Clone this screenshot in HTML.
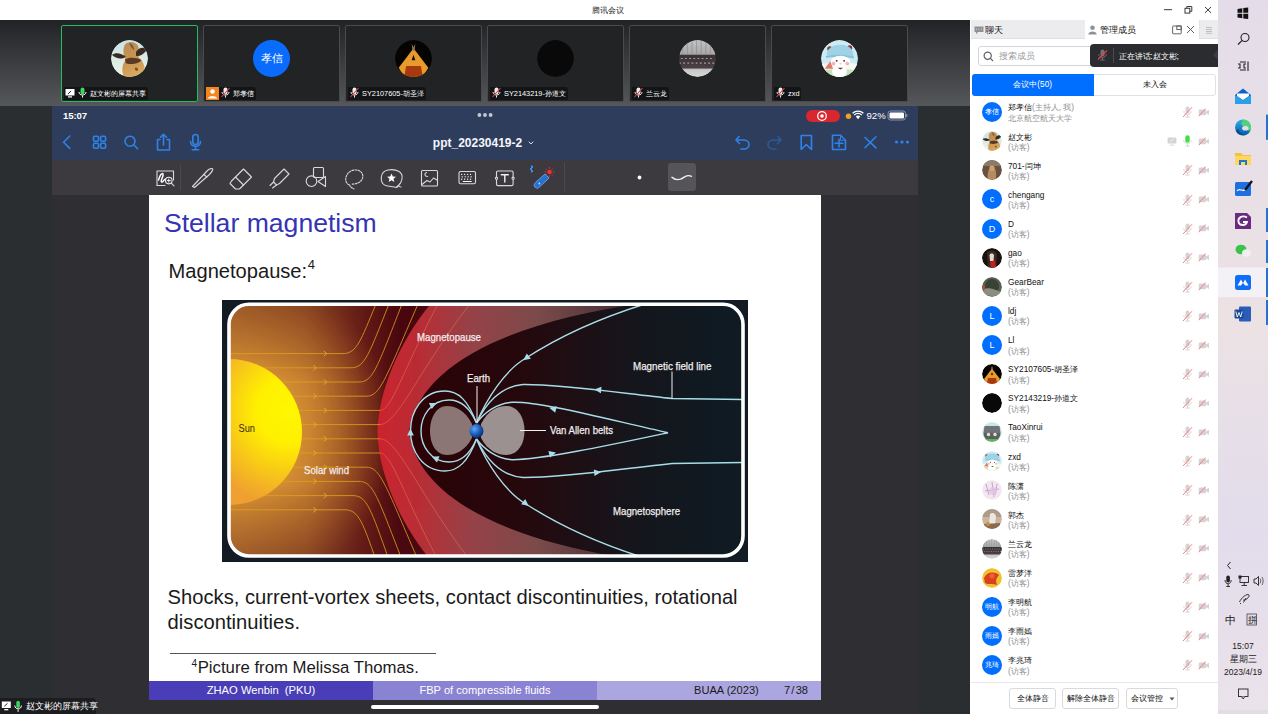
<!DOCTYPE html>
<html><head><meta charset="utf-8">
<style>
*{box-sizing:border-box;margin:0;padding:0}
html,body{width:1268px;height:714px;overflow:hidden}
body{position:relative;background:#2b2e31;font-family:"Liberation Sans",sans-serif;}
.a{position:absolute}
.tile{position:absolute;top:24.8px;width:137px;height:77px;background:#222325;border:1px solid #4a4a4c;border-radius:2px}
.tile .av{position:absolute;left:49px;top:14px;width:37px;height:37px;border-radius:50%;overflow:hidden}
.tile .lab{position:absolute;left:2px;top:61.6px;height:13px;background:#131416;border-radius:0 3px 0 0;color:#fff;font-size:7.35px;line-height:14px;white-space:nowrap;padding:0 2px 0 2px}
.tile .lab svg{margin-right:1px}
.row{position:absolute;left:971px;width:246px;height:29px}
.row .av{position:absolute;left:11px;top:4px;width:20px;height:20px;border-radius:50%;overflow:hidden;background:#006eff;color:#fff;font-size:6.5px;line-height:20px;text-align:center}
.row .n{position:absolute;left:37px;top:4.3px;font-size:8.3px;line-height:11px;color:#111;white-space:nowrap}
.row .s{position:absolute;left:37px;top:14.6px;font-size:8.3px;line-height:11px;color:#8d8f94;white-space:nowrap}
.row .ic{position:absolute;left:205px;top:7px}
.btn{position:absolute;top:688.3px;height:21px;border:1px solid #d8dade;border-radius:3px;background:#fff;font-size:8px;line-height:19px;text-align:center;color:#111;white-space:nowrap}
</style></head>
<body>

<svg width="0" height="0" style="position:absolute">
<defs>
<linearGradient id="gsky" x1="0" y1="0" x2="0" y2="1"><stop offset="0" stop-color="#c9e2e6"/><stop offset="1" stop-color="#eef3e6"/></linearGradient>
<radialGradient id="gfire" cx="0.5" cy="0.9" r="0.6"><stop offset="0" stop-color="#a83a10"/><stop offset="0.45" stop-color="#f0a030"/><stop offset="0.8" stop-color="#3a1a05"/><stop offset="1" stop-color="#050302"/></radialGradient>
<symbol id="av-giraffe" viewBox="0 0 40 40">
<linearGradient id="ggir" x1="0" y1="0" x2="0.3" y2="1"><stop offset="0" stop-color="#b98a55"/><stop offset="0.6" stop-color="#c9964f"/><stop offset="1" stop-color="#d8a860"/></linearGradient>
<circle cx="20" cy="20" r="20" fill="url(#gsky)"/>
<path d="M14 40 C11 33 12 26 16 22 C14 18 12 10 15 5 C18 1 26 1 29 6 C31 10 30 16 30 19 C35 23 38 30 36 38 L30 40Z" fill="url(#ggir)"/>
<path d="M1 16 C5 13 11 14 16 18 C12 21 6 21 1 16Z" fill="#3a2a20"/>
<path d="M27 13 C30 8 35 7 39 10 C36 15 32 18 27 17Z" fill="#3a2b22"/>
<path d="M15 21 C19 19 27 18 33 22 C30 26 22 27 16 25Z" fill="#5a3a25"/>
<path d="M20 3 C23 4 25 7 25 11 C22 9 20 6 20 3Z" fill="#7a5a3a"/>
<path d="M26 30 C28 29 30 31 29 33 C27 34 25 32 26 30Z" fill="#7a5030"/>
</symbol>
<symbol id="av-fire" viewBox="0 0 40 40">
<circle cx="20" cy="20" r="20" fill="#060403"/>
<path d="M4 30 L20 9 L36 30 L30 40 L10 40Z" fill="#e89a2a"/>
<path d="M10 40 L12 28 L28 28 L30 40Z" fill="#a8380e"/>
<path d="M18 22 L20 16 L22 22Z" fill="#111"/>
<path d="M18 4 L19 12 L21 12 L22 4 L20 8Z" fill="#9a7a5a"/>
</symbol>
<symbol id="av-black" viewBox="0 0 40 40"><circle cx="20" cy="20" r="20" fill="#0a0909"/></symbol>
<symbol id="av-gray" viewBox="0 0 40 40">
<linearGradient id="ggray" x1="0" y1="0" x2="0" y2="1"><stop offset="0" stop-color="#c4c4c4"/><stop offset="0.38" stop-color="#a8a8a8"/><stop offset="0.42" stop-color="#3a3236"/><stop offset="0.75" stop-color="#4a4044"/><stop offset="0.8" stop-color="#c8c8c8"/><stop offset="1" stop-color="#d8d8d8"/></linearGradient>
<circle cx="20" cy="20" r="20" fill="url(#ggray)"/>
<path d="M4 4 V16 M9 2 V16 M14 1 V16 M19 0 V16 M24 1 V16 M29 2 V16 M34 4 V16" stroke="#8a8a8a" stroke-width="1.2" opacity=".6"/>
<path d="M2 20 H38 M0 25 H40" stroke="#bdb8ba" stroke-width="1.3" stroke-dasharray="2 2.5" opacity=".8"/>
</symbol>
<symbol id="av-bear" viewBox="0 0 40 40">
<circle cx="20" cy="20" r="20" fill="#cdebf3"/>
<path d="M0 26 C10 24 30 24 40 26 L40 40 L0 40Z" fill="#f6f8f2"/>
<path d="M0 33 C10 31 30 31 40 33 L40 40 L0 40Z" fill="#c4e3b8"/>
<circle cx="9.5" cy="9.5" r="2.8" fill="#8a3a30"/><circle cx="31" cy="8.5" r="2.8" fill="#8a3a30"/>
<path d="M6 17 C6 8 14 5 21 5 C29 5 36 9 35 18 C30 16 12 16 6 17Z" fill="#9fd2e6"/>
<path d="M5 17.5 C12 15.5 29 15.5 36 18 L35 20 C28 18 12 18 6 19.5Z" fill="#86c3da"/>
<ellipse cx="21" cy="24" rx="10.5" ry="7" fill="#fff"/>
<ellipse cx="20" cy="34" rx="8" ry="6.5" fill="#fff"/>
<circle cx="13.5" cy="25.5" r="2.1" fill="#f6b4b4"/><circle cx="28.5" cy="25.5" r="2.1" fill="#f6b4b4"/>
<circle cx="17" cy="22.5" r="1" fill="#4a2a20"/><circle cx="25" cy="22.5" r="1" fill="#4a2a20"/>
<path d="M19.5 25.5 L21 26.5 L22.5 25.5" fill="#e88" stroke="none"/>
<path d="M4 31 L10 23 L13 31Z" fill="#e37a70"/>
<path d="M18 30 H24 L21 32Z" fill="#6a3020"/>
</symbol>
<symbol id="av-p701" viewBox="0 0 40 40">
<circle cx="20" cy="20" r="20" fill="#6a5040"/>
<rect x="0" y="0" width="40" height="12" fill="#8a7a6a"/>
<path d="M12 40 C10 30 12 16 20 12 C28 14 30 28 27 40Z" fill="#b88a60"/>
<path d="M15 14 C17 10 24 10 25 15 L24 22 L16 22Z" fill="#d0a070"/>
</symbol>
<symbol id="av-gao" viewBox="0 0 40 40">
<circle cx="20" cy="20" r="20" fill="#1a1212"/>
<path d="M10 10 C14 4 26 4 30 12 L28 40 L12 40Z" fill="#3a2a22"/>
<path d="M15 14 C17 10 23 10 24 15 L23 26 L16 26Z" fill="#e8d8d0"/>
<path d="M16 28 L26 24 L28 40 L18 40Z" fill="#c02020"/>
</symbol>
<symbol id="av-gear" viewBox="0 0 40 40">
<circle cx="20" cy="20" r="20" fill="#55604f"/>
<circle cx="20" cy="18" r="14" fill="#3a4236"/>
<path d="M2 26 C10 20 20 22 38 30 L36 36 C20 40 8 38 2 30Z" fill="#8a8f80"/>
<path d="M0 16 L6 18 L4 28 L0 26Z" fill="#b05040"/>
</symbol>
<symbol id="av-tao" viewBox="0 0 40 40">
<circle cx="20" cy="20" r="20" fill="#c8e8e0"/>
<path d="M5 8 H35 L37 22 H3Z" fill="#707478"/>
<path d="M3 22 H37 C37 32 30 38 20 38 C10 38 3 32 3 22Z" fill="#5a605a"/>
<circle cx="13" cy="25" r="3.5" fill="#e0e0e0"/><circle cx="26" cy="25" r="3.5" fill="#e0e0e0"/>
<path d="M0 34 H40 V40 H0Z" fill="#60b060"/>
</symbol>
<symbol id="av-chen" viewBox="0 0 40 40">
<circle cx="20" cy="20" r="20" fill="#f2e6f0"/>
<path d="M8 8 L14 30 M20 4 L24 34 M30 8 L26 30 M6 22 L34 18" stroke="#c8a0d0" stroke-width="2" fill="none"/>
<circle cx="22" cy="22" r="8" fill="#e0c4e0" opacity=".7"/>
</symbol>
<symbol id="av-guo" viewBox="0 0 40 40">
<circle cx="20" cy="20" r="20" fill="#c8b4a0"/>
<rect x="0" y="0" width="40" height="16" fill="#b09a88"/>
<path d="M16 10 C20 6 28 8 28 16 L26 30 L14 30Z" fill="#ece8e0"/>
<path d="M4 30 L36 28 L36 40 L4 40Z" fill="#8a6a50"/>
<circle cx="12" cy="30" r="4" fill="#d09030"/>
</symbol>
<symbol id="av-lei" viewBox="0 0 40 40">
<circle cx="20" cy="20" r="20" fill="#f0c030"/>
<path d="M4 20 C10 8 24 6 34 14 C30 20 26 22 30 34 C20 30 12 34 6 30Z" fill="#d84020"/>
<circle cx="20" cy="16" r="5" fill="#f06030"/>
</symbol>
</defs></svg>
<!-- TITLE BAR -->
<div class="a" style="left:0;top:0;width:1218px;height:20px;background:#fff"></div>
<div class="a" style="left:591.8px;top:4.9px;font-size:8.2px;line-height:12px;color:#1a1a1a">腾讯会议</div>

<!-- STRIP -->
<div class="a" style="left:0;top:20px;width:970px;height:86px;background:linear-gradient(#212326,#55575a)"></div>


<!-- TILES -->
<div class="tile" style="left:61px;border-color:#21bf5d"><svg class="av" viewBox="0 0 40 40"><use href="#av-giraffe"/></svg>
<div class="lab" style="padding-left:1px"><svg width="10" height="10" viewBox="0 0 10 10" style="vertical-align:-2px"><rect x="0.5" y="1" width="9" height="6.5" fill="#fff"/><path d="M3 6 L6 3" stroke="#222" stroke-width="1"/><rect x="3" y="8.3" width="4" height="1.2" fill="#fff"/></svg> <svg width="9" height="11" viewBox="0 0 9 11" style="vertical-align:-2px"><rect x="2.5" y="0.5" width="4" height="7" rx="2" fill="#3bd55a"/><path d="M1 5 C1 9 8 9 8 5" stroke="#fff" fill="none" stroke-width="1"/><path d="M4.5 8.5 V10.5" stroke="#fff"/></svg> 赵文彬的屏幕共享</div></div>
<div class="tile" style="left:203px"><div class="av" style="background:#0a6cff;color:#fff;font-size:11px;line-height:37px;text-align:center">孝信</div>
<div class="lab" style="left:2px;padding-left:0"><span style="display:inline-block;width:13px;height:13px;background:#f5841f;vertical-align:top;position:relative;top:0px"><svg width="13" height="13" viewBox="0 0 13 13"><circle cx="6.5" cy="4.5" r="2.3" fill="#fff"/><path d="M2 11.5 C2 8 11 8 11 11.5Z" fill="#fff"/></svg></span> <svg width="9" height="11" viewBox="0 0 9 11" style="vertical-align:-2px"><rect x="2.5" y="0.5" width="4" height="7" rx="2" fill="#eee"/><path d="M1 5 C1 9 8 9 8 5" stroke="#eee" fill="none" stroke-width="1"/><path d="M4.5 8.5 V10.5" stroke="#eee"/><path d="M0.5 10 L8.5 1" stroke="#e33a3a" stroke-width="1.1"/></svg> 郑孝信</div></div>
<div class="tile" style="left:345px"><svg class="av" viewBox="0 0 40 40"><use href="#av-fire"/></svg><div class="lab"><svg width="9" height="11" viewBox="0 0 9 11" style="vertical-align:-2px"><rect x="2.5" y="0.5" width="4" height="7" rx="2" fill="#eee"/><path d="M1 5 C1 9 8 9 8 5" stroke="#eee" fill="none" stroke-width="1"/><path d="M4.5 8.5 V10.5" stroke="#eee"/><path d="M0.5 10 L8.5 1" stroke="#e33a3a" stroke-width="1.1"/></svg> SY2107605-胡圣泽</div></div>
<div class="tile" style="left:487px"><svg class="av" viewBox="0 0 40 40"><use href="#av-black"/></svg><div class="lab"><svg width="9" height="11" viewBox="0 0 9 11" style="vertical-align:-2px"><rect x="2.5" y="0.5" width="4" height="7" rx="2" fill="#eee"/><path d="M1 5 C1 9 8 9 8 5" stroke="#eee" fill="none" stroke-width="1"/><path d="M4.5 8.5 V10.5" stroke="#eee"/><path d="M0.5 10 L8.5 1" stroke="#e33a3a" stroke-width="1.1"/></svg> SY2143219-孙道文</div></div>
<div class="tile" style="left:629px"><svg class="av" viewBox="0 0 40 40"><use href="#av-gray"/></svg><div class="lab"><svg width="9" height="11" viewBox="0 0 9 11" style="vertical-align:-2px"><rect x="2.5" y="0.5" width="4" height="7" rx="2" fill="#eee"/><path d="M1 5 C1 9 8 9 8 5" stroke="#eee" fill="none" stroke-width="1"/><path d="M4.5 8.5 V10.5" stroke="#eee"/><path d="M0.5 10 L8.5 1" stroke="#e33a3a" stroke-width="1.1"/></svg> 兰云龙</div></div>
<div class="tile" style="left:771px"><svg class="av" viewBox="0 0 40 40"><use href="#av-bear"/></svg><div class="lab"><svg width="9" height="11" viewBox="0 0 9 11" style="vertical-align:-2px"><rect x="2.5" y="0.5" width="4" height="7" rx="2" fill="#eee"/><path d="M1 5 C1 9 8 9 8 5" stroke="#eee" fill="none" stroke-width="1"/><path d="M4.5 8.5 V10.5" stroke="#eee"/><path d="M0.5 10 L8.5 1" stroke="#e33a3a" stroke-width="1.1"/></svg> zxd</div></div>

<!-- IPAD -->
<div class="a" style="left:52px;top:106px;width:866px;height:608px;background:#2f2e32"></div>
<div class="a" style="left:52px;top:106px;width:866px;height:54px;background:#2f3d5d"></div>
<div class="a" style="left:52px;top:160px;width:866px;height:35px;background:#3c3a3e"></div>


<!-- STATUS BAR -->
<div class="a" style="left:63px;top:109px;font-size:9.6px;line-height:13px;color:#fff;font-weight:bold;letter-spacing:-0.1px">15:07</div>
<svg class="a" style="left:477px;top:112px" width="16" height="6" viewBox="0 0 16 6"><circle cx="2.4" cy="3" r="1.9" fill="#c4c8d2"/><circle cx="8" cy="3" r="1.9" fill="#c4c8d2"/><circle cx="13.6" cy="3" r="1.9" fill="#c4c8d2"/></svg>
<div class="a" style="left:806px;top:109.5px;width:34px;height:12.5px;border-radius:6.5px;background:#d9262f"></div>
<svg class="a" style="left:816px;top:110px" width="12" height="12" viewBox="0 0 12 12"><circle cx="6" cy="6" r="4.3" fill="none" stroke="#fff" stroke-width="1.3"/><circle cx="6" cy="6" r="1.8" fill="#fff"/></svg>
<svg class="a" style="left:845px;top:112.5px" width="7" height="7"><circle cx="3.5" cy="3.3" r="2.7" fill="#f5a020"/></svg>
<svg class="a" style="left:852px;top:110px" width="12" height="10" viewBox="0 0 12 10"><path d="M6 9.2 L3.8 6.6 A3 3 0 0 1 8.2 6.6Z" fill="#fff"/><path d="M2.2 5.1 A5.2 5.2 0 0 1 9.8 5.1" stroke="#fff" stroke-width="1.3" fill="none"/><path d="M0.6 3.3 A7.6 7.6 0 0 1 11.4 3.3" stroke="#fff" stroke-width="1.3" fill="none"/></svg>
<div class="a" style="left:866.5px;top:109px;font-size:9.6px;line-height:13px;color:#fff">92%</div>
<svg class="a" style="left:887px;top:110px" width="22" height="11" viewBox="0 0 22 11"><rect x="1" y="1" width="17.5" height="9" rx="2.5" fill="none" stroke="#8a93a8" stroke-width="1"/><rect x="2.5" y="2.5" width="14.5" height="6" rx="1.2" fill="#fff"/><path d="M19.8 4 v3" stroke="#8a93a8" stroke-width="1.2"/></svg>

<!-- NAV ICONS -->
<svg class="a" style="left:52px;top:126px" width="866" height="33" viewBox="52 126 866 33" fill="none" stroke="#2f82e8" stroke-width="1.6" stroke-linecap="round" stroke-linejoin="round">
<path d="M69.8 136 L63.5 142.2 L69.8 148.4"/>
<rect x="93.5" y="136.2" width="5" height="5" rx="1.2"/><rect x="100.6" y="136.2" width="5" height="5" rx="1.2"/><rect x="93.5" y="143.3" width="5" height="5" rx="1.2"/><rect x="100.6" y="143.3" width="5" height="5" rx="1.2"/>
<circle cx="130" cy="141.2" r="5"/><path d="M133.6 144.8 L137.6 148.8"/>
<path d="M160 139.5 H157.5 V150 H169.5 V139.5 H167"/><path d="M163.5 145 V134.5 M160.5 137.3 L163.5 134.3 L166.5 137.3"/>
<rect x="192.8" y="134.5" width="5.4" height="10" rx="2.7"/><path d="M190.5 141.5 C190.5 148 200.5 148 200.5 141.5 M195.5 146.5 V149.7 M192.3 149.8 H198.7"/>
<path d="M739 136.5 L736 140 L739.5 143.5"/><path d="M736.5 140 H744 A5 4.5 0 0 1 744 149 H741"/>
<g stroke="#2a5a9a"><path d="M778 136.5 L781 140 L777.5 143.5"/><path d="M780.5 140 H773 A5 4.5 0 0 0 773 149 H776"/></g>
<path d="M801.2 135.5 H811.5 V149.5 L806.3 144.5 L801.2 149.5Z"/>
<path d="M832.5 135.3 H840.5 L845.5 140.3 V149.5 H832.5Z"/><path d="M840.5 135.3 V140.3 H845.5" stroke-width="1"/><path d="M839 139.3 V147 M835.2 143.2 H842.8"/>
<path d="M865 137.5 L876 147.8 M875.5 137.2 L865 147.8" /><path d="M874 138.7 L876.5 136.3" stroke-width="1"/>
</svg>
<svg class="a" style="left:894px;top:139px" width="16" height="6" viewBox="0 0 16 6"><circle cx="2.5" cy="3" r="1.6" fill="#2f82e8"/><circle cx="8" cy="3" r="1.6" fill="#2f82e8"/><circle cx="13.5" cy="3" r="1.6" fill="#2f82e8"/></svg>
<div class="a" style="left:432.8px;top:135.8px;font-size:12px;font-weight:bold;line-height:15px;color:#f4f6fa;white-space:nowrap">ppt_20230419-2</div>
<svg class="a" style="left:527px;top:140px" width="8" height="6" viewBox="0 0 8 6"><path d="M2 2 L4 3.9 L6 2" fill="none" stroke="#dfe3ea" stroke-width="1" stroke-linecap="round"/></svg>


<!-- TOOLBAR -->
<svg class="a" style="left:150px;top:159px" width="420" height="36" viewBox="150 159 420 36" fill="none" stroke="#d9d9db" stroke-width="1.1" stroke-linecap="round" stroke-linejoin="round">
<path d="M157 185.5 V171 H173.5 V180" /><path d="M157 185.5 H165"/>
<path d="M158.5 180 C160 175 162 172.5 163 174 C164 176 160 181 161.5 182 C163 183 164.5 178 166 179" stroke="#fff" stroke-width="1.5"/>
<circle cx="168.8" cy="180.6" r="3.3" fill="#3b3a3d" stroke="#e8e8e8"/><path d="M167.2 180.6 H170.4 M168.8 179 V182.2" stroke="#fff" stroke-width=".9"/><path d="M171.3 183.1 L174 185.8"/>
<path d="M180.5 165 V190" stroke="#4a494c" stroke-width="1"/>
<path d="M192.5 186.5 L207.5 170.5 C209.5 168.5 213 167.8 212.8 169.5 C212.4 171.2 211 173 209.5 174.5 L194.5 187.5 Z"/><path d="M204 174.5 L206.8 177.2"/>
<path d="M231.5 181 L243.5 169 L251.5 177 L239.5 189 L235.5 189 L230 183.5Z"/><path d="M235.5 177 L243.5 185"/>
<path d="M270 185.5 L273.5 182 L276.5 185 L272.5 188"/><path d="M273.5 182 L274.5 178.5 L284 169 L289 174 L279.5 183.5 L276.5 185"/>
<rect x="313.5" y="167.5" width="10" height="10" rx="1"/><circle cx="311.5" cy="181.2" r="5.3"/><path d="M325.5 176.5 V186.5 L318 181.5Z"/>
<path d="M349 184.8 C343 182 345.5 171 354.5 170 C361 169.5 364.5 174.5 362 179.5 C360 183 355 184.5 351 184" stroke-dasharray="1.7 1.3"/><path d="M349.5 185 C350.5 187.5 352.5 188 354 189" stroke-dasharray="1.5 1.2"/>
<path d="M385.5 185.5 C379.5 183 379.5 171.5 388 170 C396 168.5 403.5 172 402 179 C401.5 182 400 184 398.5 185.5 L396.5 187.5 C393 186.5 389 186.5 385.5 185.5Z"/>
<path d="M391.5 173.5 L392.8 176.5 L396 176.8 L393.5 178.8 L394.3 182 L391.5 180.3 L388.7 182 L389.5 178.8 L387 176.8 L390.2 176.5Z" fill="#fff" stroke="none"/>
<path d="M396.5 187.5 L398.5 185.5 C399 186.5 399.5 187 401 187" />
<rect x="421.5" y="170.5" width="16" height="15.5" rx="1"/><path d="M422 184.5 L427 180.5 L430 182 L433.5 178 L437 180"/><path d="M426.5 172.5 C424 173.5 424.5 176.5 427.5 176.5" />
<rect x="459" y="171.5" width="16.5" height="12.2" rx="1.5"/>
<path d="M461.6 174.3 H473 M462.2 176.8 H472.4 M461.6 179.2 H473" stroke="#fff" stroke-dasharray="0.1 2.85" stroke-width="1.3"/><path d="M463.2 181.5 H471.3" stroke="#fff" stroke-width="1.1"/>
<rect x="496.5" y="171" width="16.6" height="14.6" rx="1.3"/><path d="M501.3 174.8 H508.3 M504.8 174.8 V182" stroke-width="1.4" stroke="#f0f0f0"/>
<circle cx="496.5" cy="178.2" r="1.1" fill="#3c3a3e"/><circle cx="513.1" cy="178.2" r="1.1" fill="#3c3a3e"/>
<path d="M564.5 163 V191" stroke="#4a494c" stroke-width="1"/>
</svg>
<svg class="a" style="left:526px;top:164px" width="32" height="28" viewBox="526 164 32 28">
<path d="M530 168 L533 171 L531.5 172.5 V165.5 L533 167 L530 170" fill="none" stroke="#3a8ef0" stroke-width="1"/>
<path d="M535 187 C533.5 185.5 534 184 535.5 182.5 L545 174 L549 178 L539.5 187 C538 188.5 536.5 188.5 535 187Z" fill="#2a6fc8" stroke="#5aa0f5" stroke-width="1"/>
<circle cx="539.3" cy="183.5" r=".9" fill="#bfe0ff"/>
<circle cx="549.5" cy="172" r="2.3" fill="#ff2a2a"/>
<path d="M549.5 167.2 V168.5 M549.5 175.5 V176.8 M544.8 172 H546 M553 172 H554.2 M546.2 168.7 L547 169.5 M552 174.5 L552.8 175.3 M552.8 168.7 L552 169.5 M546.2 175.3 L547 174.5" stroke="#ff3a3a" stroke-width=".9"/>
</svg>
<svg class="a" style="left:636px;top:174px" width="7" height="7"><circle cx="3.5" cy="3.5" r="1.9" fill="#fff"/></svg>
<div class="a" style="left:668px;top:163px;width:27.5px;height:27.5px;border-radius:3px;background:#555458"></div>
<svg class="a" style="left:668px;top:163px" width="28" height="28" viewBox="0 0 28 28"><path d="M4 14.3 C6 16.3 9 17.2 12.5 16.2 C15.5 15.2 17 12.8 20 12.6 C21.5 12.5 22.5 12.8 23.5 13.3" fill="none" stroke="#f2f2f2" stroke-width="1.4" stroke-linecap="round"/></svg>

<!-- SLIDE -->
<div class="a" id="slide" style="left:149px;top:195px;width:672px;height:505px;background:#fff"></div>
<div class="a" style="left:163.9px;top:207.9px;font-size:26.6px;line-height:30px;color:#3434b4;white-space:nowrap">Stellar magnetism</div>
<div class="a" style="left:168.6px;top:258.6px;font-size:20.1px;line-height:24px;color:#1a1a1a;white-space:nowrap">Magnetopause:<span style="font-size:13px;position:relative;top:-8.5px;margin-left:0.5px">4</span></div>
<!-- FIGURE -->
<svg class="a" style="left:222px;top:300px" width="526" height="262" viewBox="222 300 526 262">
<defs>
<clipPath id="fclip"><rect x="229" y="304.3" width="514" height="251.7" rx="20"/></clipPath>
<linearGradient id="gwind" x1="229" y1="0" x2="400" y2="0" gradientUnits="userSpaceOnUse">
<stop offset="0" stop-color="#c8843a"/><stop offset="0.45" stop-color="#a8602c"/><stop offset="0.8" stop-color="#6a2018"/><stop offset="1" stop-color="#4a0810"/></linearGradient>
<radialGradient id="gglow" cx="229" cy="432" r="165" gradientUnits="userSpaceOnUse">
<stop offset="0.4" stop-color="#e09a34" stop-opacity="0.8"/><stop offset="1" stop-color="#d08a30" stop-opacity="0"/></radialGradient>
<linearGradient id="gwtop" x1="0" y1="304" x2="0" y2="560" gradientUnits="userSpaceOnUse">
<stop offset="0" stop-color="#4a0a10" stop-opacity="0.35"/><stop offset="0.3" stop-color="#4a0a10" stop-opacity="0"/><stop offset="0.7" stop-color="#4a0a10" stop-opacity="0"/><stop offset="1" stop-color="#4a0a10" stop-opacity="0.35"/></linearGradient>
<radialGradient id="gsun" cx="290" cy="410" r="95" gradientUnits="userSpaceOnUse">
<stop offset="0" stop-color="#fff700"/><stop offset="0.35" stop-color="#fff000"/><stop offset="1" stop-color="#f0a030"/></radialGradient>
<linearGradient id="gband" x1="378" y1="0" x2="700" y2="0" gradientUnits="userSpaceOnUse">
<stop offset="0" stop-color="#cc2530"/><stop offset="0.13" stop-color="#b82e36"/><stop offset="0.29" stop-color="#964248"/><stop offset="0.5" stop-color="#7a4a4a"/><stop offset="0.75" stop-color="#4a3236"/><stop offset="0.97" stop-color="#161c24"/></linearGradient>
<linearGradient id="ginner" x1="408" y1="0" x2="720" y2="0" gradientUnits="userSpaceOnUse">
<stop offset="0" stop-color="#2e0307"/><stop offset="0.35" stop-color="#25080c"/><stop offset="0.7" stop-color="#16151b"/><stop offset="1" stop-color="#0f1a22"/></linearGradient>
<radialGradient id="gbelt" cx="0.5" cy="0.5" r="0.6"><stop offset="0" stop-color="#9a8a88"/><stop offset="1" stop-color="#806868"/></radialGradient>
<radialGradient id="gearth" cx="0.35" cy="0.35" r="0.7"><stop offset="0" stop-color="#5aa8f0"/><stop offset="0.6" stop-color="#1a5ab8"/><stop offset="1" stop-color="#0a2a70"/></radialGradient>
</defs>
<rect x="222" y="300" width="526" height="262" fill="#131b24"/>
<g clip-path="url(#fclip)">
<rect x="229" y="304" width="514" height="252" fill="#0f1a22"/>
<rect x="229" y="304" width="200" height="252" fill="url(#gwind)"/>
<rect x="229" y="304" width="200" height="252" fill="url(#gglow)"/>
<rect x="229" y="304" width="200" height="252" fill="url(#gwtop)"/>
<path d="M434 300 C402 336 378 390 377.5 432 C378 474 402 528 434 564 L760 564 L760 300Z" fill="url(#gband)"/>
<path d="M665 301 C540 314 420 354 409 432 C420 510 540 550 665 563 L760 564 L760 300Z" fill="url(#ginner)"/>
<g fill="none" stroke="#e0a020" stroke-width="0.9" opacity="0.9">
<path d="M229.0 353.6 H343 C357 353.6 361 339.6 376 304"/>
<path d="M263.7 367.8 H351 C365 367.8 369 353.8 389 304"/>
<path d="M282.2 382.0 H359 C373 382.0 377 368.0 402 304"/>
<path d="M292.6 396.2 H366 C380 396.2 384 382.2 418 304"/>
<path d="M298.7 410.4 H380"/>
<path d="M301.6 424.6 H380"/>
<path d="M301.7 438.8 H380"/>
<path d="M298.9 453.0 H380"/>
<path d="M293.0 467.2 H366 C380 467.2 384 481.2 418 560"/>
<path d="M282.7 481.4 H359 C373 481.4 377 495.4 402 560"/>
<path d="M264.8 495.6 H353 C367 495.6 371 509.6 389 560"/>
<path d="M229.0 509.8 H345 C359 509.8 363 523.8 376 560"/>

</g>
<g fill="none" stroke="#e8b020" stroke-width="0.9">

<path d="M323.8 351.0 L326.8 353.6 L323.8 356.2"/>
<path d="M313.3 365.2 L316.3 367.8 L313.3 370.4"/>
<path d="M323.8 379.4 L326.8 382.0 L323.8 384.6"/>
<path d="M313.3 393.6 L316.3 396.2 L313.3 398.8"/>
<path d="M323.8 407.8 L326.8 410.4 L323.8 413.0"/>
<path d="M313.3 422.0 L316.3 424.6 L313.3 427.2"/>
<path d="M323.8 436.2 L326.8 438.8 L323.8 441.4"/>
<path d="M313.3 450.4 L316.3 453.0 L313.3 455.6"/>
<path d="M323.8 464.6 L326.8 467.2 L323.8 469.8"/>
<path d="M313.3 478.8 L316.3 481.4 L313.3 484.0"/>
<path d="M323.8 493.0 L326.8 495.6 L323.8 498.2"/>
<path d="M313.3 507.2 L316.3 509.8 L313.3 512.4"/>

</g>
<g fill="none" stroke="#e89060" stroke-width="0.7" opacity="0.6">
<path d="M380 410.4 C392 410 402 372 438 304"/>
<path d="M380 424.6 C398 424 420 368 470 304"/>
<path d="M380 438.8 C398 439 420 496 470 560"/>
<path d="M380 453 C392 454 402 492 438 560"/>
</g>
<circle cx="229" cy="432" r="73" fill="url(#gsun)"/>
<path d="M472 424 C465 410 455 406 447 406 C436 406 430 418 430 431 C430 444 436 455 447 455 C455 455 465 451 472 438 Z" fill="#8c7575"/>
<path d="M481 424 C488 410 498 406 506 406 C518 406 524.5 418 524.5 431 C524.5 444 518 455 506 455 C498 455 488 451 481 438 Z" fill="#9b9190"/>
<g fill="none" stroke="#a8dde8" stroke-width="1.4">
<path d="M476.5 423 C468 400 458 391 445 391 C422 391 410.5 412 410.5 431 C410.5 450 422 471 445 471 C458 471 468 462 476.5 439"/>
<path d="M476.5 423 C470 408 461 400 449 400 C431 400 421 416 421 431 C421 446 431 462 449 462 C461 462 470 454 476.5 439"/>
<path d="M476.5 423 C486 400 505 370 526 358 C560 336 600 318 645 304"/>
<path d="M476.5 439 C486 462 505 492 526 504 C560 526 600 544 645 558"/>
<path d="M476.5 423 C485 405 500 386 523 384.5 C560 384 620 393 672 398.5 L745 399.5"/>
<path d="M476.5 439 C485 457 500 476 523 477.5 C560 478 620 469 672 463.5 L745 462.5"/>
<path d="M476.5 423 C484 413 497 403 512 402.3 C540 401 610 420 668 432.7 C610 445 540 460 512 459.7 C497 459 484 449 476.5 439"/>
</g>
<g fill="#a8dde8">
<path d="M523.2 360.3 L526.8 353.5 L530.8 358.7Z"/>
<path d="M528.8 505.9 L521.2 504.3 L525.2 499.1Z"/>
<path d="M594.2 389.4 L601.5 386.8 L600.9 393.3Z"/>
<path d="M601.2 472.0 L594.5 475.9 L593.9 469.4Z"/>
<path d="M549.2 407.8 L556.8 406.2 L555.2 412.7Z"/>
<path d="M556.0 452.6 L550.0 457.5 L548.4 451.0Z"/>
<path d="M410.5 428.5 L413.8 435.5 L407.2 435.5Z"/>
<path d="M436.6 402.9 L431.8 409.0 L428.9 403.1Z"/>
<path d="M431.8 456.7 L439.5 456.2 L437.0 462.4Z"/>

</g>
<circle cx="476.5" cy="431" r="7" fill="url(#gearth)"/>
<g stroke="#f2f2f2" stroke-width="1" fill="none">
<path d="M477 386 V422.5"/>
<path d="M672 371.5 V398.5"/>
<path d="M520 430.5 H546"/>
</g>
<g font-family="Liberation Sans" font-size="10.8px" fill="#f2eeee" stroke="#f2eeee" stroke-width="0.25">
<text x="417" y="341" textLength="64" lengthAdjust="spacingAndGlyphs">Magnetopause</text>
<text x="467" y="382" textLength="23" lengthAdjust="spacingAndGlyphs">Earth</text>
<text x="633" y="369.5" textLength="78.5" lengthAdjust="spacingAndGlyphs">Magnetic field line</text>
<text x="550" y="433.5" textLength="63" lengthAdjust="spacingAndGlyphs">Van Allen belts</text>
<text x="304" y="474" textLength="45" lengthAdjust="spacingAndGlyphs">Solar wind</text>
<text x="613" y="515" textLength="67" lengthAdjust="spacingAndGlyphs">Magnetosphere</text>
<text x="238.5" y="432" textLength="16.5" lengthAdjust="spacingAndGlyphs" fill="#3a2a18" stroke="none">Sun</text>
</g>
</g>
<rect x="229" y="304.3" width="514" height="251.7" rx="20" fill="none" stroke="#fff" stroke-width="3.6"/>
</svg>
<!-- /FIGURE -->
<div class="a" style="left:167.6px;top:585.1px;font-size:20.2px;line-height:24.7px;color:#1a1a1a;white-space:nowrap">Shocks, current-vortex sheets, contact discontinuities, rotational<br>discontinuities.</div>
<div class="a" style="left:169.5px;top:652.6px;width:266.3px;height:0.9px;background:#555"></div>
<div class="a" style="left:191.6px;top:658.3px;font-size:16.75px;line-height:20px;color:#1a1a1a;white-space:nowrap"><span style="font-size:10px;position:relative;top:-6.3px;margin-right:0.5px">4</span>Picture from Melissa Thomas.</div>
<div class="a" style="left:149px;top:680.9px;width:224px;height:18.8px;background:#4a3eb8;color:#fff;font-size:11.2px;line-height:18.8px;text-align:center;white-space:pre">ZHAO Wenbin  (PKU)</div>
<div class="a" style="left:373px;top:680.9px;width:224px;height:18.8px;background:#8a82d2;color:#fff;font-size:11.1px;line-height:18.8px;text-align:center;white-space:pre">FBP of compressible fluids</div>
<div class="a" style="left:597px;top:680.9px;width:224px;height:18.8px;background:#aca6e0;color:#1a1a1a;font-size:11.1px;line-height:18.8px;white-space:pre"><span style="position:absolute;left:97px">BUAA (2023)</span><span style="position:absolute;left:187px">7<span style="margin:0 1.2px">/</span>38</span></div>
<div class="a" style="left:371px;top:705px;width:228px;height:4px;border-radius:2px;background:#fff"></div>

<!-- RIGHT PANEL -->
<div class="a" style="left:970px;top:20px;width:248px;height:694px;background:#fff"></div>







<!-- RIGHT PANEL CONTENT -->
<div class="a" style="left:971px;top:20px;width:114px;height:18.6px;background:#ececef;border-bottom:1px solid #e0e0e4"></div>
<div class="a" style="left:1199px;top:20px;width:19px;height:18.6px;background:#ececef;border-left:1px solid #e3e3e6;border-bottom:1px solid #e0e0e4"></div>
<svg class="a" style="left:973.5px;top:25.5px" width="10" height="9" viewBox="0 0 10 9"><path d="M0.5 0.5 H9.5 V6 H4 L2 8.3 V6 H0.5Z" fill="#8f9196"/><path d="M2.3 3.2 H2.9 M4.7 3.2 H5.3 M7.1 3.2 H7.7" stroke="#fff" stroke-width="1"/></svg>
<div class="a" style="left:985px;top:23.5px;font-size:8.6px;line-height:12px;color:#111">聊天</div>
<svg class="a" style="left:1087.5px;top:24.5px" width="9" height="10" viewBox="0 0 9 10"><circle cx="4.5" cy="2.8" r="2.3" fill="#8f9196"/><path d="M0.3 9.5 C0.3 5.5 8.7 5.5 8.7 9.5Z" fill="#8f9196"/></svg>
<div class="a" style="left:1100px;top:23.5px;font-size:8.6px;line-height:12px;color:#111">管理成员</div>
<svg class="a" style="left:1172px;top:24.5px" width="10" height="10" viewBox="0 0 10 10" fill="none" stroke="#555" stroke-width="0.9"><rect x="0.6" y="1" width="8.6" height="7.8" rx="0.6"/><rect x="4.8" y="1" width="4.4" height="3.6"/></svg>
<svg class="a" style="left:1186px;top:25px" width="9" height="9" viewBox="0 0 9 9" stroke="#555" stroke-width="0.95"><path d="M1 1 L8 8 M8 1 L1 8"/></svg>
<svg class="a" style="left:1204.5px;top:25.5px" width="8" height="8" viewBox="0 0 8 8" stroke="#b8b9bd" stroke-width="0.9"><path d="M1 1.5 H7 M1 3.5 H7 M1 5.5 H7 M1 7.3 H7"/></svg>

<div class="a" style="left:978.3px;top:46.2px;width:130px;height:19.5px;border:1px solid #d3d6db;border-radius:3px;background:#fff"></div>
<svg class="a" style="left:982.5px;top:50.5px" width="11" height="11" viewBox="0 0 11 11" fill="none" stroke="#5f6166" stroke-width="1.2"><circle cx="4.7" cy="4.7" r="3.6"/><path d="M7.4 7.4 L10 10"/></svg>
<div class="a" style="left:998.5px;top:49.5px;font-size:8.6px;line-height:12px;color:#9a9ca1">搜索成员</div>
<div class="a" style="left:1090px;top:43.7px;width:128px;height:23.2px;background:#2a2c30;border-radius:4px 0 0 4px"></div>
<svg class="a" style="left:1096.5px;top:49px" width="11" height="12" viewBox="0 0 11 12"><rect x="3.5" y="0.5" width="4" height="7" rx="2" fill="#6f7176"/><path d="M1.8 5.2 C1.8 9.5 9.2 9.5 9.2 5.2" fill="none" stroke="#6f7176" stroke-width="1"/><path d="M5.5 8.8 V10.8 M3.3 11 H7.7" stroke="#6f7176" stroke-width="1"/><path d="M1 10.5 L10 1.5" stroke="#e84040" stroke-width="1.1"/></svg>
<div class="a" style="left:1113px;top:48px;width:1px;height:15px;background:#4a4c50"></div>
<div class="a" style="left:1119.3px;top:49.5px;font-size:8.4px;line-height:12px;color:#fff;white-space:nowrap;letter-spacing:-0.25px">正在讲话<span style="letter-spacing:-1.5px">:</span> 赵文彬;</div>
<svg class="a" style="left:1212px;top:50px" width="6" height="10" viewBox="0 0 6 10"><path d="M6 0 L1 5 L6 10Z" fill="#3a3c40"/></svg>

<div class="a" style="left:971.5px;top:74px;width:244px;height:22.4px;border:1px solid #dfe1e5;border-radius:3px;background:#fff"></div>
<div class="a" style="left:971.5px;top:74px;width:122.3px;height:22.4px;background:#006eff;border-radius:3px 0 0 3px;color:#fff;font-size:8.2px;line-height:22.4px;text-align:center">会议中(50)</div>
<div class="a" style="left:1093.8px;top:74px;width:121.7px;height:22.4px;color:#111;font-size:8.2px;line-height:22.4px;text-align:center">未入会</div>

<div class="row" style="top:98.20px"><div class="av" style="font-size:6.6px">孝信</div><div class="n">郑孝信<span style="color:#8d8f94">(主持人, 我)</span></div><div class="s">北京航空航天大学</div></div>
<svg class="a" style="left:1182px;top:106.2px" width="11" height="12" viewBox="0 0 11 12"><rect x="3.5" y="0.5" width="4" height="7" rx="2" fill="#d4d4d6"/><path d="M1.8 5.2 C1.8 9.5 9.2 9.5 9.2 5.2" fill="none" stroke="#d4d4d6" stroke-width="1"/><path d="M5.5 8.8 V10.8 M3.3 11 H7.7" stroke="#d4d4d6" stroke-width="1"/><path d="M1 11 L10 1.2" stroke="#ff7a7a" stroke-width="1"/></svg>
<svg class="a" style="left:1197.5px;top:107.9px" width="12" height="9" viewBox="0 0 12 9"><rect x="0.8" y="1.6" width="7.2" height="5.6" rx="0.8" fill="#d4d4d6"/><path d="M8 3.6 L11 1.8 V7 L8 5.2Z" fill="#d4d4d6"/><path d="M0.8 8.2 L7.6 0.6" stroke="#ff7a7a" stroke-width="1"/></svg>
<div class="row" style="top:127.29px"><svg class="av" style="background:none" viewBox="0 0 40 40"><use href="#av-giraffe"/></svg><div class="n">赵文彬</div><div class="s">(访客)</div></div>
<svg class="a" style="left:1167px;top:136.8px" width="10" height="9" viewBox="0 0 10 9"><rect x="0.6" y="0.5" width="8.8" height="6" rx="0.6" fill="#d4d4d6"/><path d="M3.5 4.5 L6.5 2.2" stroke="#fff" stroke-width=".8"/><rect x="3" y="7.6" width="4" height="1" fill="#d4d4d6"/></svg>
<svg class="a" style="left:1182px;top:135.3px" width="11" height="12" viewBox="0 0 11 12"><rect x="3.3" y="0.3" width="4.4" height="7.5" rx="2.2" fill="#3ee04a"/><path d="M1.8 5.2 C1.8 9.5 9.2 9.5 9.2 5.2" fill="none" stroke="#d4d4d6" stroke-width="1"/><path d="M5.5 8.8 V10.8 M3.3 11 H7.7" stroke="#d4d4d6" stroke-width="1"/></svg>
<svg class="a" style="left:1197.5px;top:137.0px" width="12" height="9" viewBox="0 0 12 9"><rect x="0.8" y="1.6" width="7.2" height="5.6" rx="0.8" fill="#d4d4d6"/><path d="M8 3.6 L11 1.8 V7 L8 5.2Z" fill="#d4d4d6"/><path d="M0.8 8.2 L7.6 0.6" stroke="#ff7a7a" stroke-width="1"/></svg>
<div class="row" style="top:156.38px"><svg class="av" style="background:none" viewBox="0 0 40 40"><use href="#av-p701"/></svg><div class="n">701-闫坤</div><div class="s">(访客)</div></div>
<svg class="a" style="left:1182px;top:164.4px" width="11" height="12" viewBox="0 0 11 12"><rect x="3.5" y="0.5" width="4" height="7" rx="2" fill="#d4d4d6"/><path d="M1.8 5.2 C1.8 9.5 9.2 9.5 9.2 5.2" fill="none" stroke="#d4d4d6" stroke-width="1"/><path d="M5.5 8.8 V10.8 M3.3 11 H7.7" stroke="#d4d4d6" stroke-width="1"/><path d="M1 11 L10 1.2" stroke="#ff7a7a" stroke-width="1"/></svg>
<svg class="a" style="left:1197.5px;top:166.1px" width="12" height="9" viewBox="0 0 12 9"><rect x="0.8" y="1.6" width="7.2" height="5.6" rx="0.8" fill="#d4d4d6"/><path d="M8 3.6 L11 1.8 V7 L8 5.2Z" fill="#d4d4d6"/><path d="M0.8 8.2 L7.6 0.6" stroke="#ff7a7a" stroke-width="1"/></svg>
<div class="row" style="top:185.47px"><div class="av" style="font-size:9px">c</div><div class="n">chengang</div><div class="s">(访客)</div></div>
<svg class="a" style="left:1182px;top:193.5px" width="11" height="12" viewBox="0 0 11 12"><rect x="3.5" y="0.5" width="4" height="7" rx="2" fill="#d4d4d6"/><path d="M1.8 5.2 C1.8 9.5 9.2 9.5 9.2 5.2" fill="none" stroke="#d4d4d6" stroke-width="1"/><path d="M5.5 8.8 V10.8 M3.3 11 H7.7" stroke="#d4d4d6" stroke-width="1"/><path d="M1 11 L10 1.2" stroke="#ff7a7a" stroke-width="1"/></svg>
<svg class="a" style="left:1197.5px;top:195.2px" width="12" height="9" viewBox="0 0 12 9"><rect x="0.8" y="1.6" width="7.2" height="5.6" rx="0.8" fill="#d4d4d6"/><path d="M8 3.6 L11 1.8 V7 L8 5.2Z" fill="#d4d4d6"/><path d="M0.8 8.2 L7.6 0.6" stroke="#ff7a7a" stroke-width="1"/></svg>
<div class="row" style="top:214.56px"><div class="av" style="font-size:9px">D</div><div class="n">D</div><div class="s">(访客)</div></div>
<svg class="a" style="left:1182px;top:222.6px" width="11" height="12" viewBox="0 0 11 12"><rect x="3.5" y="0.5" width="4" height="7" rx="2" fill="#d4d4d6"/><path d="M1.8 5.2 C1.8 9.5 9.2 9.5 9.2 5.2" fill="none" stroke="#d4d4d6" stroke-width="1"/><path d="M5.5 8.8 V10.8 M3.3 11 H7.7" stroke="#d4d4d6" stroke-width="1"/><path d="M1 11 L10 1.2" stroke="#ff7a7a" stroke-width="1"/></svg>
<svg class="a" style="left:1197.5px;top:224.3px" width="12" height="9" viewBox="0 0 12 9"><rect x="0.8" y="1.6" width="7.2" height="5.6" rx="0.8" fill="#d4d4d6"/><path d="M8 3.6 L11 1.8 V7 L8 5.2Z" fill="#d4d4d6"/><path d="M0.8 8.2 L7.6 0.6" stroke="#ff7a7a" stroke-width="1"/></svg>
<div class="row" style="top:243.65px"><svg class="av" style="background:none" viewBox="0 0 40 40"><use href="#av-gao"/></svg><div class="n">gao</div><div class="s">(访客)</div></div>
<svg class="a" style="left:1182px;top:251.6px" width="11" height="12" viewBox="0 0 11 12"><rect x="3.5" y="0.5" width="4" height="7" rx="2" fill="#d4d4d6"/><path d="M1.8 5.2 C1.8 9.5 9.2 9.5 9.2 5.2" fill="none" stroke="#d4d4d6" stroke-width="1"/><path d="M5.5 8.8 V10.8 M3.3 11 H7.7" stroke="#d4d4d6" stroke-width="1"/><path d="M1 11 L10 1.2" stroke="#ff7a7a" stroke-width="1"/></svg>
<svg class="a" style="left:1197.5px;top:253.3px" width="12" height="9" viewBox="0 0 12 9"><rect x="0.8" y="1.6" width="7.2" height="5.6" rx="0.8" fill="#d4d4d6"/><path d="M8 3.6 L11 1.8 V7 L8 5.2Z" fill="#d4d4d6"/><path d="M0.8 8.2 L7.6 0.6" stroke="#ff7a7a" stroke-width="1"/></svg>
<div class="row" style="top:272.74px"><svg class="av" style="background:none" viewBox="0 0 40 40"><use href="#av-gear"/></svg><div class="n">GearBear</div><div class="s">(访客)</div></div>
<svg class="a" style="left:1182px;top:280.7px" width="11" height="12" viewBox="0 0 11 12"><rect x="3.5" y="0.5" width="4" height="7" rx="2" fill="#d4d4d6"/><path d="M1.8 5.2 C1.8 9.5 9.2 9.5 9.2 5.2" fill="none" stroke="#d4d4d6" stroke-width="1"/><path d="M5.5 8.8 V10.8 M3.3 11 H7.7" stroke="#d4d4d6" stroke-width="1"/><path d="M1 11 L10 1.2" stroke="#ff7a7a" stroke-width="1"/></svg>
<svg class="a" style="left:1197.5px;top:282.4px" width="12" height="9" viewBox="0 0 12 9"><rect x="0.8" y="1.6" width="7.2" height="5.6" rx="0.8" fill="#d4d4d6"/><path d="M8 3.6 L11 1.8 V7 L8 5.2Z" fill="#d4d4d6"/><path d="M0.8 8.2 L7.6 0.6" stroke="#ff7a7a" stroke-width="1"/></svg>
<div class="row" style="top:301.83px"><div class="av" style="font-size:9px">L</div><div class="n">ldj</div><div class="s">(访客)</div></div>
<svg class="a" style="left:1182px;top:309.8px" width="11" height="12" viewBox="0 0 11 12"><rect x="3.5" y="0.5" width="4" height="7" rx="2" fill="#d4d4d6"/><path d="M1.8 5.2 C1.8 9.5 9.2 9.5 9.2 5.2" fill="none" stroke="#d4d4d6" stroke-width="1"/><path d="M5.5 8.8 V10.8 M3.3 11 H7.7" stroke="#d4d4d6" stroke-width="1"/><path d="M1 11 L10 1.2" stroke="#ff7a7a" stroke-width="1"/></svg>
<svg class="a" style="left:1197.5px;top:311.5px" width="12" height="9" viewBox="0 0 12 9"><rect x="0.8" y="1.6" width="7.2" height="5.6" rx="0.8" fill="#d4d4d6"/><path d="M8 3.6 L11 1.8 V7 L8 5.2Z" fill="#d4d4d6"/><path d="M0.8 8.2 L7.6 0.6" stroke="#ff7a7a" stroke-width="1"/></svg>
<div class="row" style="top:330.92px"><div class="av" style="font-size:9px">L</div><div class="n">Ll</div><div class="s">(访客)</div></div>
<svg class="a" style="left:1182px;top:338.9px" width="11" height="12" viewBox="0 0 11 12"><rect x="3.5" y="0.5" width="4" height="7" rx="2" fill="#d4d4d6"/><path d="M1.8 5.2 C1.8 9.5 9.2 9.5 9.2 5.2" fill="none" stroke="#d4d4d6" stroke-width="1"/><path d="M5.5 8.8 V10.8 M3.3 11 H7.7" stroke="#d4d4d6" stroke-width="1"/><path d="M1 11 L10 1.2" stroke="#ff7a7a" stroke-width="1"/></svg>
<svg class="a" style="left:1197.5px;top:340.6px" width="12" height="9" viewBox="0 0 12 9"><rect x="0.8" y="1.6" width="7.2" height="5.6" rx="0.8" fill="#d4d4d6"/><path d="M8 3.6 L11 1.8 V7 L8 5.2Z" fill="#d4d4d6"/><path d="M0.8 8.2 L7.6 0.6" stroke="#ff7a7a" stroke-width="1"/></svg>
<div class="row" style="top:360.01px"><svg class="av" style="background:none" viewBox="0 0 40 40"><use href="#av-fire"/></svg><div class="n">SY2107605-胡圣泽</div><div class="s">(访客)</div></div>
<svg class="a" style="left:1182px;top:368.0px" width="11" height="12" viewBox="0 0 11 12"><rect x="3.5" y="0.5" width="4" height="7" rx="2" fill="#d4d4d6"/><path d="M1.8 5.2 C1.8 9.5 9.2 9.5 9.2 5.2" fill="none" stroke="#d4d4d6" stroke-width="1"/><path d="M5.5 8.8 V10.8 M3.3 11 H7.7" stroke="#d4d4d6" stroke-width="1"/><path d="M1 11 L10 1.2" stroke="#ff7a7a" stroke-width="1"/></svg>
<svg class="a" style="left:1197.5px;top:369.7px" width="12" height="9" viewBox="0 0 12 9"><rect x="0.8" y="1.6" width="7.2" height="5.6" rx="0.8" fill="#d4d4d6"/><path d="M8 3.6 L11 1.8 V7 L8 5.2Z" fill="#d4d4d6"/><path d="M0.8 8.2 L7.6 0.6" stroke="#ff7a7a" stroke-width="1"/></svg>
<div class="row" style="top:389.10px"><svg class="av" style="background:none" viewBox="0 0 40 40"><use href="#av-black"/></svg><div class="n">SY2143219-孙道文</div><div class="s">(访客)</div></div>
<svg class="a" style="left:1182px;top:397.1px" width="11" height="12" viewBox="0 0 11 12"><rect x="3.5" y="0.5" width="4" height="7" rx="2" fill="#d4d4d6"/><path d="M1.8 5.2 C1.8 9.5 9.2 9.5 9.2 5.2" fill="none" stroke="#d4d4d6" stroke-width="1"/><path d="M5.5 8.8 V10.8 M3.3 11 H7.7" stroke="#d4d4d6" stroke-width="1"/><path d="M1 11 L10 1.2" stroke="#ff7a7a" stroke-width="1"/></svg>
<svg class="a" style="left:1197.5px;top:398.8px" width="12" height="9" viewBox="0 0 12 9"><rect x="0.8" y="1.6" width="7.2" height="5.6" rx="0.8" fill="#d4d4d6"/><path d="M8 3.6 L11 1.8 V7 L8 5.2Z" fill="#d4d4d6"/><path d="M0.8 8.2 L7.6 0.6" stroke="#ff7a7a" stroke-width="1"/></svg>
<div class="row" style="top:418.19px"><svg class="av" style="background:none" viewBox="0 0 40 40"><use href="#av-tao"/></svg><div class="n">TaoXinrui</div><div class="s">(访客)</div></div>
<svg class="a" style="left:1182px;top:426.2px" width="11" height="12" viewBox="0 0 11 12"><rect x="3.5" y="0.5" width="4" height="7" rx="2" fill="#d4d4d6"/><path d="M1.8 5.2 C1.8 9.5 9.2 9.5 9.2 5.2" fill="none" stroke="#d4d4d6" stroke-width="1"/><path d="M5.5 8.8 V10.8 M3.3 11 H7.7" stroke="#d4d4d6" stroke-width="1"/><path d="M1 11 L10 1.2" stroke="#ff7a7a" stroke-width="1"/></svg>
<svg class="a" style="left:1197.5px;top:427.9px" width="12" height="9" viewBox="0 0 12 9"><rect x="0.8" y="1.6" width="7.2" height="5.6" rx="0.8" fill="#d4d4d6"/><path d="M8 3.6 L11 1.8 V7 L8 5.2Z" fill="#d4d4d6"/><path d="M0.8 8.2 L7.6 0.6" stroke="#ff7a7a" stroke-width="1"/></svg>
<div class="row" style="top:447.28px"><svg class="av" style="background:none" viewBox="0 0 40 40"><use href="#av-bear"/></svg><div class="n">zxd</div><div class="s">(访客)</div></div>
<svg class="a" style="left:1182px;top:455.3px" width="11" height="12" viewBox="0 0 11 12"><rect x="3.5" y="0.5" width="4" height="7" rx="2" fill="#d4d4d6"/><path d="M1.8 5.2 C1.8 9.5 9.2 9.5 9.2 5.2" fill="none" stroke="#d4d4d6" stroke-width="1"/><path d="M5.5 8.8 V10.8 M3.3 11 H7.7" stroke="#d4d4d6" stroke-width="1"/><path d="M1 11 L10 1.2" stroke="#ff7a7a" stroke-width="1"/></svg>
<svg class="a" style="left:1197.5px;top:457.0px" width="12" height="9" viewBox="0 0 12 9"><rect x="0.8" y="1.6" width="7.2" height="5.6" rx="0.8" fill="#d4d4d6"/><path d="M8 3.6 L11 1.8 V7 L8 5.2Z" fill="#d4d4d6"/><path d="M0.8 8.2 L7.6 0.6" stroke="#ff7a7a" stroke-width="1"/></svg>
<div class="row" style="top:476.37px"><svg class="av" style="background:none" viewBox="0 0 40 40"><use href="#av-chen"/></svg><div class="n">陈潇</div><div class="s">(访客)</div></div>
<svg class="a" style="left:1182px;top:484.4px" width="11" height="12" viewBox="0 0 11 12"><rect x="3.5" y="0.5" width="4" height="7" rx="2" fill="#d4d4d6"/><path d="M1.8 5.2 C1.8 9.5 9.2 9.5 9.2 5.2" fill="none" stroke="#d4d4d6" stroke-width="1"/><path d="M5.5 8.8 V10.8 M3.3 11 H7.7" stroke="#d4d4d6" stroke-width="1"/><path d="M1 11 L10 1.2" stroke="#ff7a7a" stroke-width="1"/></svg>
<svg class="a" style="left:1197.5px;top:486.1px" width="12" height="9" viewBox="0 0 12 9"><rect x="0.8" y="1.6" width="7.2" height="5.6" rx="0.8" fill="#d4d4d6"/><path d="M8 3.6 L11 1.8 V7 L8 5.2Z" fill="#d4d4d6"/><path d="M0.8 8.2 L7.6 0.6" stroke="#ff7a7a" stroke-width="1"/></svg>
<div class="row" style="top:505.46px"><svg class="av" style="background:none" viewBox="0 0 40 40"><use href="#av-guo"/></svg><div class="n">郭杰</div><div class="s">(访客)</div></div>
<svg class="a" style="left:1182px;top:513.5px" width="11" height="12" viewBox="0 0 11 12"><rect x="3.5" y="0.5" width="4" height="7" rx="2" fill="#d4d4d6"/><path d="M1.8 5.2 C1.8 9.5 9.2 9.5 9.2 5.2" fill="none" stroke="#d4d4d6" stroke-width="1"/><path d="M5.5 8.8 V10.8 M3.3 11 H7.7" stroke="#d4d4d6" stroke-width="1"/><path d="M1 11 L10 1.2" stroke="#ff7a7a" stroke-width="1"/></svg>
<svg class="a" style="left:1197.5px;top:515.2px" width="12" height="9" viewBox="0 0 12 9"><rect x="0.8" y="1.6" width="7.2" height="5.6" rx="0.8" fill="#d4d4d6"/><path d="M8 3.6 L11 1.8 V7 L8 5.2Z" fill="#d4d4d6"/><path d="M0.8 8.2 L7.6 0.6" stroke="#ff7a7a" stroke-width="1"/></svg>
<div class="row" style="top:534.55px"><svg class="av" style="background:none" viewBox="0 0 40 40"><use href="#av-gray"/></svg><div class="n">兰云龙</div><div class="s">(访客)</div></div>
<svg class="a" style="left:1182px;top:542.6px" width="11" height="12" viewBox="0 0 11 12"><rect x="3.5" y="0.5" width="4" height="7" rx="2" fill="#d4d4d6"/><path d="M1.8 5.2 C1.8 9.5 9.2 9.5 9.2 5.2" fill="none" stroke="#d4d4d6" stroke-width="1"/><path d="M5.5 8.8 V10.8 M3.3 11 H7.7" stroke="#d4d4d6" stroke-width="1"/><path d="M1 11 L10 1.2" stroke="#ff7a7a" stroke-width="1"/></svg>
<svg class="a" style="left:1197.5px;top:544.3px" width="12" height="9" viewBox="0 0 12 9"><rect x="0.8" y="1.6" width="7.2" height="5.6" rx="0.8" fill="#d4d4d6"/><path d="M8 3.6 L11 1.8 V7 L8 5.2Z" fill="#d4d4d6"/><path d="M0.8 8.2 L7.6 0.6" stroke="#ff7a7a" stroke-width="1"/></svg>
<div class="row" style="top:563.64px"><svg class="av" style="background:none" viewBox="0 0 40 40"><use href="#av-lei"/></svg><div class="n">雷梦洋</div><div class="s">(访客)</div></div>
<svg class="a" style="left:1182px;top:571.6px" width="11" height="12" viewBox="0 0 11 12"><rect x="3.5" y="0.5" width="4" height="7" rx="2" fill="#d4d4d6"/><path d="M1.8 5.2 C1.8 9.5 9.2 9.5 9.2 5.2" fill="none" stroke="#d4d4d6" stroke-width="1"/><path d="M5.5 8.8 V10.8 M3.3 11 H7.7" stroke="#d4d4d6" stroke-width="1"/><path d="M1 11 L10 1.2" stroke="#ff7a7a" stroke-width="1"/></svg>
<svg class="a" style="left:1197.5px;top:573.3px" width="12" height="9" viewBox="0 0 12 9"><rect x="0.8" y="1.6" width="7.2" height="5.6" rx="0.8" fill="#d4d4d6"/><path d="M8 3.6 L11 1.8 V7 L8 5.2Z" fill="#d4d4d6"/><path d="M0.8 8.2 L7.6 0.6" stroke="#ff7a7a" stroke-width="1"/></svg>
<div class="row" style="top:592.73px"><div class="av" style="font-size:6.6px">明航</div><div class="n">李明航</div><div class="s">(访客)</div></div>
<svg class="a" style="left:1182px;top:600.7px" width="11" height="12" viewBox="0 0 11 12"><rect x="3.5" y="0.5" width="4" height="7" rx="2" fill="#d4d4d6"/><path d="M1.8 5.2 C1.8 9.5 9.2 9.5 9.2 5.2" fill="none" stroke="#d4d4d6" stroke-width="1"/><path d="M5.5 8.8 V10.8 M3.3 11 H7.7" stroke="#d4d4d6" stroke-width="1"/><path d="M1 11 L10 1.2" stroke="#ff7a7a" stroke-width="1"/></svg>
<svg class="a" style="left:1197.5px;top:602.4px" width="12" height="9" viewBox="0 0 12 9"><rect x="0.8" y="1.6" width="7.2" height="5.6" rx="0.8" fill="#d4d4d6"/><path d="M8 3.6 L11 1.8 V7 L8 5.2Z" fill="#d4d4d6"/><path d="M0.8 8.2 L7.6 0.6" stroke="#ff7a7a" stroke-width="1"/></svg>
<div class="row" style="top:621.82px"><div class="av" style="font-size:6.6px">雨嫣</div><div class="n">李雨嫣</div><div class="s">(访客)</div></div>
<svg class="a" style="left:1182px;top:629.8px" width="11" height="12" viewBox="0 0 11 12"><rect x="3.5" y="0.5" width="4" height="7" rx="2" fill="#d4d4d6"/><path d="M1.8 5.2 C1.8 9.5 9.2 9.5 9.2 5.2" fill="none" stroke="#d4d4d6" stroke-width="1"/><path d="M5.5 8.8 V10.8 M3.3 11 H7.7" stroke="#d4d4d6" stroke-width="1"/><path d="M1 11 L10 1.2" stroke="#ff7a7a" stroke-width="1"/></svg>
<svg class="a" style="left:1197.5px;top:631.5px" width="12" height="9" viewBox="0 0 12 9"><rect x="0.8" y="1.6" width="7.2" height="5.6" rx="0.8" fill="#d4d4d6"/><path d="M8 3.6 L11 1.8 V7 L8 5.2Z" fill="#d4d4d6"/><path d="M0.8 8.2 L7.6 0.6" stroke="#ff7a7a" stroke-width="1"/></svg>
<div class="row" style="top:650.91px"><div class="av" style="font-size:6.6px">兆琦</div><div class="n">李兆琦</div><div class="s">(访客)</div></div>
<svg class="a" style="left:1182px;top:658.9px" width="11" height="12" viewBox="0 0 11 12"><rect x="3.5" y="0.5" width="4" height="7" rx="2" fill="#d4d4d6"/><path d="M1.8 5.2 C1.8 9.5 9.2 9.5 9.2 5.2" fill="none" stroke="#d4d4d6" stroke-width="1"/><path d="M5.5 8.8 V10.8 M3.3 11 H7.7" stroke="#d4d4d6" stroke-width="1"/><path d="M1 11 L10 1.2" stroke="#ff7a7a" stroke-width="1"/></svg>
<svg class="a" style="left:1197.5px;top:660.6px" width="12" height="9" viewBox="0 0 12 9"><rect x="0.8" y="1.6" width="7.2" height="5.6" rx="0.8" fill="#d4d4d6"/><path d="M8 3.6 L11 1.8 V7 L8 5.2Z" fill="#d4d4d6"/><path d="M0.8 8.2 L7.6 0.6" stroke="#ff7a7a" stroke-width="1"/></svg>

<div class="a" style="left:971px;top:682px;width:247px;height:1px;background:#e6e7ea"></div>
<div class="btn" style="left:1009px;width:47.4px">全体静音</div>
<div class="btn" style="left:1062.4px;width:57px">解除全体静音</div>
<div class="btn" style="left:1125.5px;width:52.1px;text-align:left;padding-left:4px">会议管控<svg style="position:absolute;left:42px;top:8px" width="6" height="4" viewBox="0 0 6 4"><path d="M0.5 0.5 H5.5 L3 3.5Z" fill="#555"/></svg></div>
<!-- /RIGHT PANEL CONTENT -->
<!-- TASKBAR -->
<div class="a" style="left:1218px;top:0;width:50px;height:714px;background:linear-gradient(#e4dde9,#ece2e4 45%,#e2dcec 75%,#ebe3ea)"></div>

<!-- TASKBAR CONTENT -->
<svg class="a" style="left:1160px;top:3px" width="56" height="14" viewBox="1160 3 56 14" fill="none" stroke="#3a3a3a" stroke-width="1">
<path d="M1164 9.7 H1172"/>
<rect x="1185" y="8.3" width="4.8" height="4.8"/><path d="M1186.8 8.3 V6.5 H1191.8 V11.3 H1189.8"/>
<path d="M1205 7 L1211 12.8 M1211 7 L1205 12.8"/>
</svg>
<svg class="a" style="left:1218px;top:0px" width="50" height="714" viewBox="1218 0 50 714">
<path d="M1237.5 9 L1242.3 8.3 V12.8 H1237.5Z M1243.3 8.1 L1248.2 7.5 V12.8 H1243.3Z M1237.5 13.8 H1242.3 V18.3 L1237.5 17.6Z M1243.3 13.8 H1248.2 V19 L1243.3 18.5Z" fill="#111"/>
<circle cx="1245" cy="37.5" r="4" fill="none" stroke="#222" stroke-width="1.1"/><path d="M1242.2 40.3 L1238 44.5" stroke="#222" stroke-width="1.2"/>
<path d="M1240 62 H1246 M1240 70 H1246 M1238 64 H1240 V68 H1238 M1246 64 H1244 V68 H1246 M1248 61.5 V71" fill="none" stroke="#222" stroke-width="1.1"/>
<path d="M1243 88.6 L1251 95 V104 H1235 V95Z" fill="#0a64c8"/>
<path d="M1235 95 L1243 100.5 L1251 95 V104 H1235Z" fill="#2aa0e8"/>
<path d="M1237 93.5 H1249 V96 L1243 100 L1237 96Z" fill="#fff"/>
<defs><linearGradient id="gedge" x1="0" y1="0" x2="0" y2="1"><stop offset="0" stop-color="#2fb0e8"/><stop offset="1" stop-color="#0b57a8"/></linearGradient></defs>
<circle cx="1243" cy="127.5" r="8" fill="url(#gedge)"/>
<path d="M1243 119.5 C1247.5 119.5 1251 123 1251 127.5 L1251 130 C1249 131 1246.5 130.5 1245.5 129 L1241 124 C1242 121.5 1243 120 1243 119.5Z" fill="#52d27a"/>
<ellipse cx="1245.3" cy="128.3" rx="3.2" ry="2.3" fill="#e4dfe8"/>
<path d="M1236 131 C1238 134.5 1242 135.8 1245 135.2 C1241 134 1238.5 131.5 1238.5 128.5Z" fill="#0a4a90"/>
<path d="M1235 153 H1241 L1243 155 H1251 V165 H1235Z" fill="#f5c33b"/>
<path d="M1235 156 H1251 V165 H1235Z" fill="#ffd75e"/>
<path d="M1239 165 V160 H1247 V165 H1245 V162 H1241 V165Z" fill="#1f78d0"/>
<rect x="1235" y="182" width="16" height="14" rx="1.5" fill="#1e6fe0"/>
<path d="M1237 191 C1240 187 1242 193 1246 189" fill="none" stroke="#fff" stroke-width="1.2"/>
<path d="M1245 190 L1252 181" stroke="#111" stroke-width="2.2"/>
<rect x="1235" y="213" width="16" height="16" fill="#6a2a80"/>
<path d="M1247 217.5 C1242 214.5 1237.5 218 1238.5 222 C1239.5 226 1246 226 1247 222 H1243" fill="none" stroke="#fff" stroke-width="1.8"/>
<path d="M1247 213 L1251 217 V213Z" fill="#e4dfe8"/>
<ellipse cx="1241" cy="249.5" rx="5.5" ry="4.8" fill="#3ac34a"/>
<ellipse cx="1246.5" cy="253" rx="4.5" ry="3.8" fill="#f0f0f0"/>
<rect x="1218" y="267.5" width="48" height="29.7" fill="#f4f1f6"/>
<rect x="1235" y="275" width="16" height="15" rx="2.5" fill="#0f6ef5"/>
<path d="M1237.5 285.5 L1241 279.5 L1243 283 L1245 279.5 L1248.5 285.5 L1245 285.5 L1243 282.8 L1241 285.5Z" fill="#fff"/>
<rect x="1239" y="306.5" width="12" height="15" rx="1" fill="#2a5cb8"/>
<rect x="1234.5" y="309.5" width="9" height="9" rx="1" fill="#1a4a9a"/>
<path d="M1235.8 311.5 L1237.3 317 L1239 312.5 L1240.7 317 L1242.2 311.5" fill="none" stroke="#fff" stroke-width=".9"/>
<g fill="#2a70d0">
<rect x="1266" y="114.6" width="2" height="25.2"/>
<rect x="1266" y="208" width="2" height="24"/>
<rect x="1266" y="240" width="2" height="23"/>
<rect x="1266" y="268" width="2" height="29"/>
<rect x="1266" y="300" width="2" height="25"/>
</g>
<path d="M1230.5 562 L1227.5 565.5 L1230.5 569" fill="none" stroke="#222" stroke-width="1"/>
<rect x="1226.3" y="575.5" width="3.6" height="7" rx="1.8" fill="#222"/><path d="M1225 580 C1225 585 1231.2 585 1231.2 580 M1228.1 584 V586.5 M1226.3 586.5 H1230" fill="none" stroke="#222" stroke-width=".9"/>
<rect x="1240" y="576.5" width="8.5" height="6" fill="none" stroke="#222" stroke-width=".9"/><path d="M1244.2 582.5 V585.5 M1241.5 585.5 H1247" stroke="#222" stroke-width=".9"/><rect x="1238.5" y="575.5" width="3" height="3" fill="#222"/>
<path d="M1254 579 H1256 L1258.5 576.5 V585.5 L1256 583 H1254Z" fill="none" stroke="#222" stroke-width=".9"/><path d="M1260 578.5 C1261 580 1261 582 1260 583.5 M1262 577 C1263.5 579 1263.5 583 1262 585" fill="none" stroke="#444" stroke-width=".8"/>
<path d="M1239.5 602 C1241 598 1247 593 1249 595 C1250 597 1245 601 1243 600 M1241 603 L1240 604 M1246 598 L1243.5 602.5" fill="none" stroke="#222" stroke-width=".9"/>
<rect x="1247" y="614" width="9.5" height="11" fill="none" stroke="#444" stroke-width=".8"/>
<rect x="1238.5" y="689" width="9.5" height="7.5" fill="none" stroke="#222" stroke-width=".9"/><path d="M1241.5 696.5 L1243.2 699 L1244.9 696.5" fill="#e8e2ea" stroke="#222" stroke-width=".9"/>
<rect x="1218" y="710" width="50" height="4" fill="#e2dde4"/>
</svg>
<div class="a" style="left:1225px;top:613.5px;font-size:11px;line-height:13px;color:#111;white-space:nowrap">中</div>
<div class="a" style="left:1247.7px;top:614.8px;font-size:8.5px;line-height:10px;color:#111;white-space:nowrap">拼</div>
<div class="a" style="left:1218px;top:639.5px;width:50px;text-align:center;font-size:8.5px;line-height:13px;color:#1a1a1a;white-space:nowrap">15:07<br>星期三<br>2023/4/19</div>
<!-- /TASKBAR CONTENT -->

<!-- BOTTOM LEFT LABEL -->
<div class="a" style="left:0;top:698px;width:96px;height:16px;background:#1c1d20;border-radius:0 4px 0 0"></div>
<svg class="a" style="left:1px;top:700px" width="24" height="13" viewBox="0 0 24 13"><rect x="0.8" y="1.5" width="9" height="6.5" fill="#fff"/><path d="M3.3 6.3 L6.5 3.3" stroke="#222" stroke-width="1"/><rect x="3.3" y="9" width="4" height="1.3" fill="#fff"/>
<rect x="15.3" y="0.8" width="3.6" height="7.2" rx="1.8" fill="#3bd55a"/><path d="M13.8 5.5 C13.8 10 20.4 10 20.4 5.5" stroke="#fff" fill="none" stroke-width="1"/><path d="M17.1 9.5 V11.8" stroke="#fff"/></svg>
<div class="a" style="left:26px;top:699.8px;font-size:8.8px;line-height:12px;color:#fff;white-space:nowrap">赵文彬的屏幕共享</div>
<!-- /BOTTOM LEFT END -->
</body></html>
